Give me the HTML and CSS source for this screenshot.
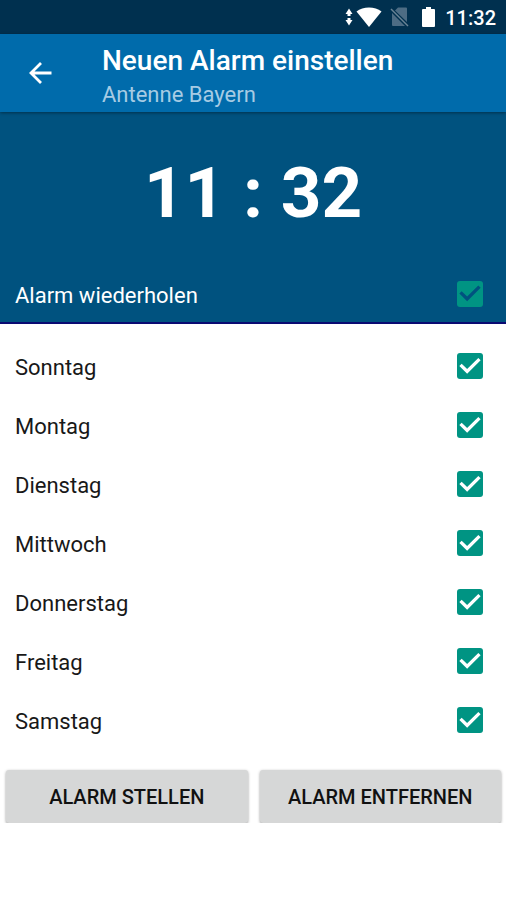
FILE: index.html
```html
<!DOCTYPE html>
<html lang="de">
<head>
    <meta charset="UTF-8">
    <meta name="viewport" content="width=device-width, initial-scale=1.0">
    <title>Neuen Alarm einstellen</title>
    <link rel="stylesheet" href="styles.css">
</head>
<body>
    <div class="status-bar">
        <svg class="icon-data" width="8" height="18" viewBox="0 0 8 18" fill="#fff">
            <path d="M4 0.500L7.500 6H5.500v2h-3V6h-2zM4 17.500L7.500 12H5.500v-2h-3v2h-2z"/>
        </svg>
        <svg class="icon-wifi" width="26" height="20" viewBox="0 0 26 20" fill="#fff">
            <path d="M13 20L0.500 4.500C7 -1 19 -1 25.500 4.500z"/>
        </svg>
        <svg class="icon-sim" width="20" height="20" viewBox="0 0 20 20">
            <path d="M8 0.500h8q1 0 1 1V15L5 3.500zM2 6l13 13H3q-1 0-1-1z" fill="#4d6c84"/>
            <path d="M1 2l17 17" stroke="#6b8496" stroke-width="1.500"/>
        </svg>
        <svg class="icon-battery" width="13" height="20" viewBox="0 0 13 20" fill="#fff">
            <path d="M4 0h5v2h3q1 0 1 1v16q0 1-1 1H1q-1 0-1-1V3q0-1 1-1h3z"/>
        </svg>
        <span class="clock">11:32</span>
    </div>

    <header class="toolbar">
        <button class="back" type="button" aria-label="Zurück">
            <svg width="24" height="24" viewBox="0 0 24 24" fill="none" stroke="#fff" stroke-width="2.800">
                <path d="M23.500 12H3M13 2L3 12l10 10"/>
            </svg>
        </button>
        <div class="titles">
            <h1>Neuen Alarm einstellen</h1>
            <p>Antenne Bayern</p>
        </div>
    </header>

    <section class="alarm">
        <div class="time">11 : 32</div>
        <label class="row">Alarm wiederholen <input type="checkbox" checked></label>
    </section>

    <main>
        <div class="days">
            <label class="row">Sonntag <input type="checkbox" checked></label>
            <label class="row">Montag <input type="checkbox" checked></label>
            <label class="row">Dienstag <input type="checkbox" checked></label>
            <label class="row">Mittwoch <input type="checkbox" checked></label>
            <label class="row">Donnerstag <input type="checkbox" checked></label>
            <label class="row">Freitag <input type="checkbox" checked></label>
            <label class="row">Samstag <input type="checkbox" checked></label>
        </div>
        <div class="buttons">
            <button type="button">ALARM STELLEN</button>
            <button type="button">ALARM ENTFERNEN</button>
        </div>
    </main>
</body>
</html>
```

FILE: styles.css
```css
body {
    font-family: Roboto, "Liberation Sans", sans-serif;
    background-color: #fff;
    color: #181818;
    margin: 0;
}
.status-bar {
    display: flex;
    align-items: center;
    justify-content: flex-end;
    height: 34px;
    padding-right: 10px;
    background-color: #00304f;
    color: #fff;
}
.icon-data {
    margin-right: 3px;
}
.icon-wifi {
    margin-right: 8px;
}
.icon-sim {
    margin-right: 12px;
}
.icon-battery {
    margin-right: 10px;
}
.clock {
    font-size: 20px;
    font-weight: 500;
    line-height: 34px;
    padding-top: 2px;
}
.toolbar {
    position: relative;
    display: flex;
    align-items: center;
    height: 78px;
    padding-left: 16px;
    background-color: #006bab;
    color: #fff;
    box-shadow: 0 1px 3px rgba(0, 0, 0, 0.4);
}
.back {
    display: flex;
    align-items: center;
    justify-content: center;
    width: 48px;
    height: 48px;
    margin-right: 38px;
    padding: 0;
    border: 0;
    background: none;
}
.titles {
    padding-top: 8px;
}
.titles h1 {
    margin: 0;
    font-size: 28px;
    font-weight: 500;
    line-height: 36px;
}
.titles p {
    margin: 0;
    font-size: 22px;
    line-height: 32px;
    color: #a6cbe4;
}
.alarm {
    background-color: #00527f;
    border-bottom: 2px solid #0a0a72;
    color: #fff;
}
.time {
    padding: 38px 0 28px;
    font-size: 71px;
    font-weight: 700;
    line-height: 86px;
    text-align: center;
}
.row {
    display: flex;
    align-items: center;
    justify-content: space-between;
    height: 59px;
    padding: 0 23px 0 15px;
    font-size: 22px;
}
.alarm .row {
    height: 54px;
    padding-top: 4px;
}
.row input {
    appearance: none;
    width: 26px;
    height: 26px;
    margin: 0 0 3px;
    border-radius: 3px;
    background-color: #009483;
}
.row input:checked::before {
    content: "";
    display: block;
    width: 26px;
    height: 26px;
    background-color: #fff;
    clip-path: polygon(39% 80%, 9% 50%, 18% 41%, 39% 62%, 82% 19%, 91% 28%);
}
.alarm .row input:checked::before {
    background-color: #00527f;
}
.days {
    padding: 14px 0 19px;
}
.buttons {
    display: flex;
    gap: 12px;
    padding: 0 5px 0 6px;
}
.buttons button {
    flex: 1;
    height: 53px;
    padding: 0;
    border: 0;
    border-radius: 3px;
    background-color: #d6d7d7;
    color: #111;
    font-family: inherit;
    font-size: 20px;
    font-weight: 500;
    box-shadow: 0 1px 3px rgba(0, 0, 0, 0.4);
}
```
